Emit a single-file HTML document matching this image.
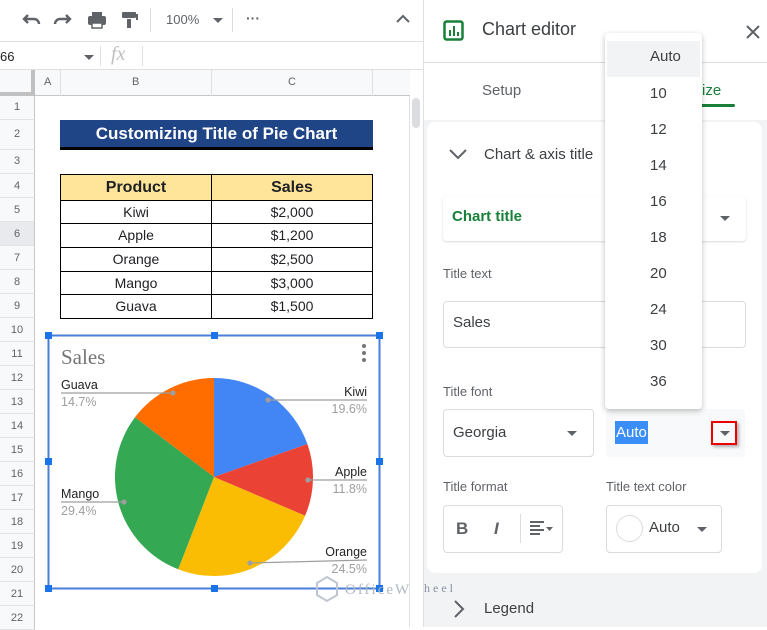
<!DOCTYPE html>
<html><head><meta charset="utf-8"><style>
*{box-sizing:border-box;margin:0;padding:0}
body{width:767px;height:627px;overflow:hidden;position:relative;background:#fff;font-family:"Liberation Sans",Arial,sans-serif;color:#202124}
.a{position:absolute}
.rh{position:absolute;left:0;width:35px;background:#f8f9fa;border-bottom:1px solid #e2e3e3;border-right:1px solid #c7c7c7;font-size:11px;color:#5f6368;text-align:center}
.cell{position:absolute;border:1px solid #000;font-size:14px;text-align:center;line-height:22px}
.dd{position:absolute;font-size:15px;color:#3c4043;left:650px}
.lbl{font-size:13px;color:#5f6368;position:absolute}
.box{position:absolute;border:1px solid #dadce0;border-radius:4px;background:#fff}
.tri{display:block;width:0;height:0;border-left:5px solid transparent;border-right:5px solid transparent;border-top:5px solid #5f6368}
</style></head><body>
<div class="a" style="left:0;top:0;width:423px;height:42px;background:#fff;border-bottom:1px solid #e0e0e0"></div>
<svg class="a" style="left:22px;top:10px" width="150" height="22" viewBox="0 0 150 22">
<path d="M6 8 L2 12 L6 16 M2 12 H12 a5 5 0 0 1 5 5" stroke="#5f6368" stroke-width="2.4" fill="none" transform="translate(0,-3)"/>
<path d="M52 8 L56 12 L52 16 M56 12 H46 a5 5 0 0 0 -5 5" stroke="#5f6368" stroke-width="2.4" fill="none" transform="translate(-8,-3)"/>
<rect x="66" y="6" width="18" height="9" rx="2" fill="#5f6368"/><rect x="70" y="2" width="10" height="4" fill="#5f6368"/><rect x="70" y="13" width="10" height="5" fill="#fff" stroke="#5f6368" stroke-width="1.5"/>
<rect x="100" y="2" width="14" height="6" rx="1" fill="#5f6368"/><rect x="114" y="4" width="2" height="6" fill="#5f6368"/><rect x="105" y="9" width="4" height="9" fill="#5f6368"/>
</svg>
<div class="a" style="left:150px;top:8px;width:1px;height:24px;background:#dadce0"></div>
<div class="a" style="left:166px;top:12px;font-size:13px;color:#5f6368">100%</div>
<div class="a" style="left:213px;top:18px"><span class="tri"></span></div>
<div class="a" style="left:232px;top:8px;width:1px;height:24px;background:#dadce0"></div>
<div class="a" style="left:246px;top:10px;font-size:14px;color:#5f6368;font-weight:bold">···</div>
<svg class="a" style="left:395px;top:14px" width="16" height="10"><path d="M2 8 L8 2 L14 8" stroke="#5f6368" stroke-width="2" fill="none"/></svg>
<div class="a" style="left:0;top:43px;width:423px;height:27px;border-bottom:1px solid #e0e0e0"></div>
<div class="a" style="left:0;top:49px;font-size:13px">66</div>
<div class="a" style="left:84px;top:55px"><span class="tri"></span></div>
<div class="a" style="left:100px;top:46px;width:1px;height:20px;background:#e0e0e0"></div>
<div class="a" style="left:111px;top:43px;font-size:20px;font-style:italic;color:#c0c0c0;font-family:'Liberation Serif',serif">fx</div>
<div class="a" style="left:142px;top:46px;width:1px;height:20px;background:#e0e0e0"></div>
<div class="a" style="left:0;top:70px;width:410px;height:26px;background:#f8f9fa;border-bottom:1px solid #c7c7c7"></div>
<div class="a" style="left:0;top:70px;width:35px;height:26px;border-right:4px solid #c0c0c0;border-bottom:4px solid #c0c0c0"></div>
<div class="a" style="left:60px;top:70px;width:1px;height:26px;background:#e0e0e0"></div>
<div class="a" style="left:211px;top:70px;width:1px;height:26px;background:#e0e0e0"></div>
<div class="a" style="left:372px;top:70px;width:1px;height:26px;background:#e0e0e0"></div>
<div class="a" style="left:44px;top:76px;font-size:11px;color:#5f6368">A</div>
<div class="a" style="left:132px;top:76px;font-size:11px;color:#5f6368">B</div>
<div class="a" style="left:288px;top:76px;font-size:11px;color:#5f6368">C</div>
<div class="rh" style="top:96px;height:24px;line-height:22px">1</div>
<div class="rh" style="top:120px;height:30px;line-height:28px">2</div>
<div class="rh" style="top:150px;height:24px;line-height:22px">3</div>
<div class="rh" style="top:174px;height:24px;line-height:24px">4</div>
<div class="rh" style="top:198px;height:24px;line-height:24px">5</div>
<div class="rh" style="top:222px;height:24px;line-height:24px;background:#e8eaed">6</div>
<div class="rh" style="top:246px;height:24px;line-height:24px">7</div>
<div class="rh" style="top:270px;height:24px;line-height:24px">8</div>
<div class="rh" style="top:294px;height:24px;line-height:24px">9</div>
<div class="rh" style="top:318px;height:24px;line-height:24px">10</div>
<div class="rh" style="top:342px;height:24px;line-height:24px">11</div>
<div class="rh" style="top:366px;height:24px;line-height:24px">12</div>
<div class="rh" style="top:390px;height:24px;line-height:24px">13</div>
<div class="rh" style="top:414px;height:24px;line-height:24px">14</div>
<div class="rh" style="top:438px;height:24px;line-height:24px">15</div>
<div class="rh" style="top:462px;height:24px;line-height:24px">16</div>
<div class="rh" style="top:486px;height:24px;line-height:24px">17</div>
<div class="rh" style="top:510px;height:24px;line-height:24px">18</div>
<div class="rh" style="top:534px;height:24px;line-height:24px">19</div>
<div class="rh" style="top:558px;height:24px;line-height:24px">20</div>
<div class="rh" style="top:582px;height:24px;line-height:24px">21</div>
<div class="rh" style="top:606px;height:24px;line-height:24px">22</div>
<div class="a" style="left:409px;top:96px;width:14px;height:531px;border-left:1px solid #e0e0e0;background:#fff"></div>
<div class="a" style="left:412px;top:98px;width:8px;height:30px;border-radius:4px;background:#dadce0"></div>
<div class="a" style="left:60px;top:120px;width:313px;height:30px;background:#1f4587;border-bottom:3px solid #000;color:#fff;font-weight:bold;font-size:17px;text-align:center;line-height:28px">Customizing Title of Pie Chart</div>
<div class="cell" style="left:60px;top:174px;width:152px;height:27px;background:#ffe599;font-weight:bold;font-size:16px;line-height:25px">Product</div>
<div class="cell" style="left:211px;top:174px;width:162px;height:27px;background:#ffe599;font-weight:bold;font-size:16px;line-height:25px">Sales</div>
<div class="cell" style="left:60px;top:200px;width:152px;height:24px">Kiwi</div><div class="cell" style="left:211px;top:200px;width:162px;height:24px">$2,000</div>
<div class="cell" style="left:60px;top:223px;width:152px;height:25px">Apple</div><div class="cell" style="left:211px;top:223px;width:162px;height:25px">$1,200</div>
<div class="cell" style="left:60px;top:247px;width:152px;height:25px">Orange</div><div class="cell" style="left:211px;top:247px;width:162px;height:25px">$2,500</div>
<div class="cell" style="left:60px;top:271px;width:152px;height:24px">Mango</div><div class="cell" style="left:211px;top:271px;width:162px;height:24px">$3,000</div>
<div class="cell" style="left:60px;top:294px;width:152px;height:25px">Guava</div><div class="cell" style="left:211px;top:294px;width:162px;height:25px">$1,500</div>
<svg class="a" style="left:0;top:0" width="423" height="627">
<rect x="48.5" y="335.5" width="331" height="253" fill="#fff" stroke="#4a7ed8" stroke-width="2"/>
<g fill="#1a73e8"><rect x="45" y="332" width="7" height="7"/><rect x="211" y="332" width="7" height="7"/><rect x="376" y="332" width="7" height="7"/><rect x="45" y="458" width="7" height="7"/><rect x="376" y="458" width="7" height="7"/><rect x="45" y="585" width="7" height="7"/><rect x="211" y="585" width="7" height="7"/><rect x="376" y="585" width="7" height="7"/></g>
<text x="61" y="364" font-family="Liberation Serif,Georgia,serif" font-size="21" fill="#757575">Sales</text>
<g fill="#757575"><circle cx="364" cy="346" r="2"/><circle cx="364" cy="353" r="2"/><circle cx="364" cy="360" r="2"/></g>
<path d="M214 477 L214 378 A99 99 0 0 1 307.4 444 Z" fill="#4285f4"/>
<path d="M214 477 L307.4 444 A99 99 0 0 1 305.1 515.7 Z" fill="#ea4335"/>
<path d="M214 477 L305.1 515.7 A99 99 0 0 1 178.2 569.3 Z" fill="#fbbc04"/>
<path d="M214 477 L178.2 569.3 A99 99 0 0 1 135 417.3 Z" fill="#34a853"/>
<path d="M214 477 L135 417.3 A99 99 0 0 1 214 378 Z" fill="#ff6d01"/>
<g stroke="#9e9e9e" stroke-width="1.2" fill="#9e9e9e">
<line x1="61" y1="393" x2="173" y2="393"/><circle cx="173" cy="393" r="2"/>
<line x1="268" y1="400" x2="367" y2="400"/><circle cx="268" cy="400" r="2"/>
<line x1="308" y1="480" x2="367" y2="480"/><circle cx="308" cy="480" r="2"/>
<line x1="61" y1="502" x2="124" y2="502"/><circle cx="124" cy="502" r="2"/>
<line x1="250" y1="563" x2="367" y2="560"/><circle cx="250" cy="563" r="2"/>
</g>
<g font-family="Liberation Sans,Arial,sans-serif" font-size="12.5">
<text x="61" y="389" fill="#222">Guava</text><text x="61" y="406" fill="#9e9e9e">14.7%</text>
<text x="367" y="396" fill="#222" text-anchor="end">Kiwi</text><text x="367" y="413" fill="#9e9e9e" text-anchor="end">19.6%</text>
<text x="367" y="476" fill="#222" text-anchor="end">Apple</text><text x="367" y="493" fill="#9e9e9e" text-anchor="end">11.8%</text>
<text x="61" y="498" fill="#222">Mango</text><text x="61" y="515" fill="#9e9e9e">29.4%</text>
<text x="367" y="556" fill="#222" text-anchor="end">Orange</text><text x="367" y="573" fill="#9e9e9e" text-anchor="end">24.5%</text>
</g>
<text x="345" y="594" font-family="Liberation Serif,serif" font-size="15" fill="#b0b8c4" letter-spacing="2">OfficeW</text>
<path d="M327 577 l10 6 v12 l-10 6 l-10 -6 v-12z" fill="none" stroke="#c0c6d0" stroke-width="2"/>
</svg>
<div class="a" style="left:423px;top:0;width:344px;height:627px;background:#f1f3f4;border-left:1px solid #e0e0e0"></div>
<div class="a" style="left:424px;top:0;width:343px;height:120px;background:#fff"></div>
<div class="a" style="left:424px;top:62px;width:343px;height:1px;background:#dadce0"></div>
<svg class="a" style="left:443px;top:20px" width="22" height="22"><rect x="1.5" y="1.5" width="18" height="18" rx="2" fill="none" stroke="#188038" stroke-width="2.5"/><rect x="6" y="10" width="2" height="6" fill="#188038"/><rect x="10" y="6" width="2" height="10" fill="#188038"/><rect x="14" y="12" width="2" height="4" fill="#188038"/></svg>
<div class="a" style="left:482px;top:19px;font-size:18px;color:#3c4043">Chart editor</div>
<svg class="a" style="left:746px;top:25px" width="14" height="14"><path d="M1 1 L13 13 M13 1 L1 13" stroke="#5f6368" stroke-width="2"/></svg>
<div class="a" style="left:482px;top:82px;font-size:15px;color:#5f6368">Setup</div>
<div class="a" style="left:702px;top:82px;font-size:15px;color:#188038">ize</div>
<div class="a" style="left:700px;top:104px;width:35px;height:3px;background:#188038;border-radius:2px"></div>
<div class="a" style="left:427px;top:122px;width:335px;height:451px;background:#fff;border-radius:8px"></div>
<svg class="a" style="left:449px;top:148px" width="18" height="12"><path d="M1 2 L9 10 L17 2" stroke="#5f6368" stroke-width="2" fill="none"/></svg>
<div class="a" style="left:484px;top:146px;font-size:15px;color:#3c4043">Chart &amp; axis title</div>
<div class="box" style="left:443px;top:196px;width:303px;height:45px;box-shadow:0 1px 2px rgba(0,0,0,.15);border:none"></div>
<div class="a" style="left:452px;top:208px;font-size:15px;color:#188038;font-weight:bold">Chart title</div>
<div class="a" style="left:720px;top:216px"><span class="tri"></span></div>
<div class="lbl" style="left:443px;top:266px">Title text</div>
<div class="box" style="left:443px;top:301px;width:303px;height:47px"></div>
<div class="a" style="left:453px;top:314px;font-size:15px;color:#3c4043">Sales</div>
<div class="lbl" style="left:443px;top:384px">Title font</div>
<div class="box" style="left:443px;top:409px;width:151px;height:48px"></div>
<div class="a" style="left:453px;top:424px;font-size:15px;color:#3c4043">Georgia</div>
<div class="a" style="left:567px;top:431px"><span class="tri"></span></div>
<div class="a" style="left:606px;top:409px;width:139px;height:48px;background:#f8f9fa;border-radius:4px"></div>
<div class="a" style="left:615px;top:421px;height:23px;padding:0 1px;background:#3b8df8;color:#fff;font-size:15px;line-height:23px">Auto</div>
<div class="a" style="left:711px;top:421px;width:26px;height:24px;border:2px solid #e00;background:#f8f9fa;box-shadow:2px 2px 3px rgba(0,0,0,.3);padding:8px 0 0 7px"><span class="tri"></span></div>
<div class="lbl" style="left:443px;top:479px">Title format</div>
<div class="lbl" style="left:606px;top:479px">Title text color</div>
<div class="box" style="left:443px;top:505px;width:120px;height:48px"></div>
<div class="a" style="left:456px;top:519px;font-size:17px;font-weight:bold;color:#5f6368">B</div>
<div class="a" style="left:494px;top:519px;font-size:17px;font-weight:bold;font-style:italic;color:#5f6368">I</div>
<div class="a" style="left:520px;top:514px;width:1px;height:29px;background:#dadce0"></div>
<svg class="a" style="left:530px;top:520px" width="30" height="18"><g fill="#5f6368"><rect x="0" y="1" width="14" height="2"/><rect x="0" y="5" width="10" height="2"/><rect x="0" y="9" width="14" height="2"/><rect x="0" y="13" width="10" height="2"/><path d="M16 7 h7 l-3.5 4z"/></g></svg>
<div class="box" style="left:606px;top:505px;width:116px;height:48px"></div>
<div class="a" style="left:616px;top:515px;width:27px;height:27px;border-radius:50%;border:1px solid #dadce0"></div>
<div class="a" style="left:649px;top:519px;font-size:15px;color:#3c4043">Auto</div>
<div class="a" style="left:697px;top:527px"><span class="tri"></span></div>
<svg class="a" style="left:453px;top:600px" width="12" height="18"><path d="M2 1 L10 9 L2 17" stroke="#5f6368" stroke-width="2" fill="none"/></svg>
<div class="a" style="left:484px;top:600px;font-size:15px;color:#3c4043">Legend</div>
<div class="a" style="left:424px;top:581px;font-size:12px;color:#8a94a6;font-family:'Liberation Serif',serif;letter-spacing:3px">heel</div>
<div class="a" style="left:605px;top:33px;width:97px;height:376px;background:#fff;border-radius:4px;box-shadow:0 2px 6px rgba(0,0,0,.25)"></div>
<div class="a" style="left:607px;top:41px;width:93px;height:36px;background:#f1f3f4"></div>
<div class="dd" style="top:48px">Auto</div>
<div class="dd" style="top:85px">10</div>
<div class="dd" style="top:121px">12</div>
<div class="dd" style="top:157px">14</div>
<div class="dd" style="top:193px">16</div>
<div class="dd" style="top:229px">18</div>
<div class="dd" style="top:265px">20</div>
<div class="dd" style="top:301px">24</div>
<div class="dd" style="top:337px">30</div>
<div class="dd" style="top:373px">36</div>
</body></html>
